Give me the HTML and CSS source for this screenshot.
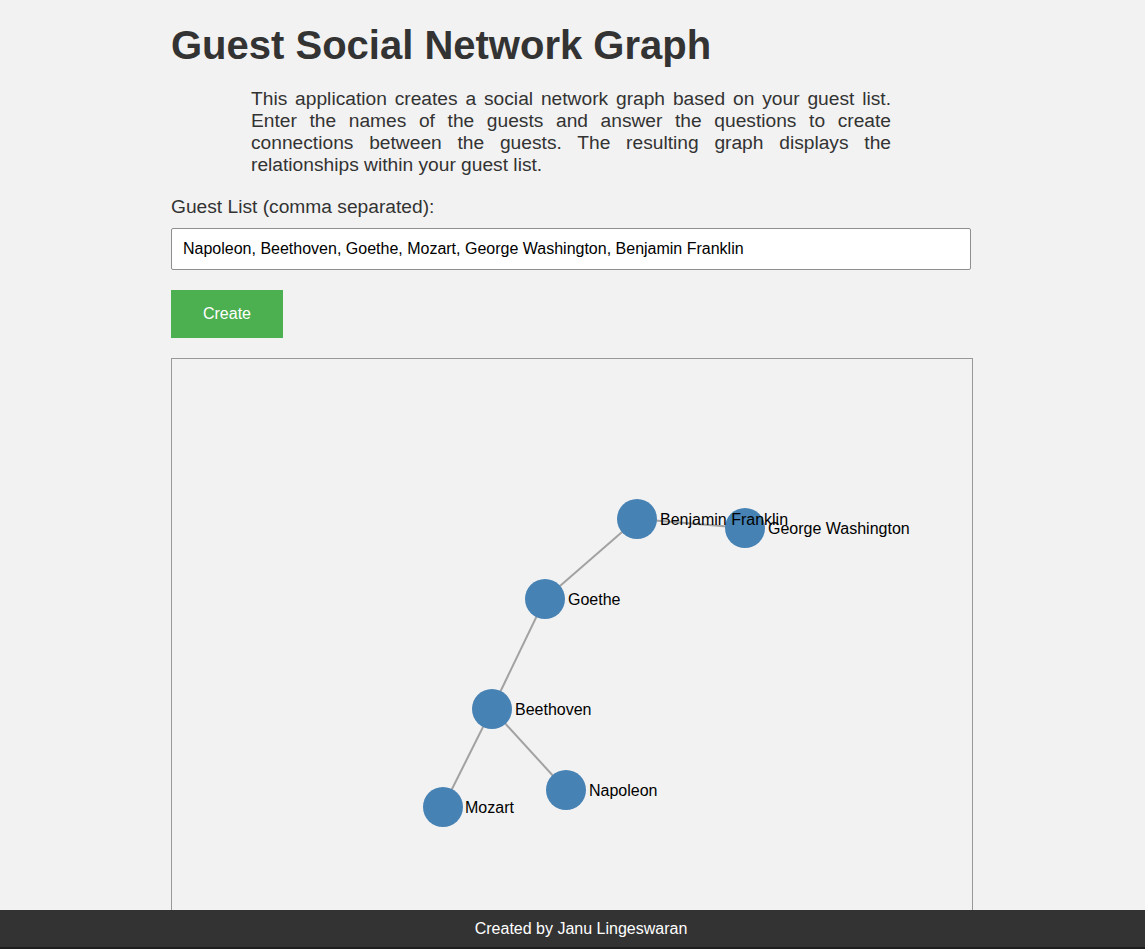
FILE: index.html
```html
<!DOCTYPE html>
<html lang="en">
<head>
<meta charset="utf-8">
<title>Guest Social Network Graph</title>
<link rel="stylesheet" href="styles.css">
</head>
<body>
<main class="container">
  <h1 class="title">Guest Social Network Graph</h1>
  <p class="intro">This application creates a social network graph based on your guest list. Enter the names of the guests and answer the questions to create connections between the guests. The resulting graph displays the relationships within your guest list.</p>
  <label class="field-label" for="guests">Guest List (comma separated):</label>
  <input class="guest-input" id="guests" type="text" value="Napoleon, Beethoven, Goethe, Mozart, George Washington, Benjamin Franklin">
  <button class="create-btn" type="button">Create</button>
  <div class="graph">
    <svg class="graph-svg" width="800" height="600" viewBox="0 0 800 600">
      <g class="links">
        <line x1="465" y1="160" x2="573" y2="169"/>
        <line x1="465" y1="160" x2="373" y2="240"/>
        <line x1="373" y1="240" x2="320" y2="350"/>
        <line x1="320" y1="350" x2="271" y2="448"/>
        <line x1="320" y1="350" x2="394" y2="431"/>
      </g>
      <g class="nodes">
        <circle cx="465" cy="160" r="20"/>
        <circle cx="573" cy="169" r="20"/>
        <circle cx="373" cy="240" r="20"/>
        <circle cx="320" cy="350" r="20"/>
        <circle cx="271" cy="448" r="20"/>
        <circle cx="394" cy="431" r="20"/>
      </g>
      <g class="labels">
        <text x="488" y="166">Benjamin Franklin</text>
        <text x="596" y="175">George Washington</text>
        <text x="396" y="246">Goethe</text>
        <text x="343" y="356">Beethoven</text>
        <text x="293" y="454">Mozart</text>
        <text x="417" y="437">Napoleon</text>
      </g>
    </svg>
  </div>
</main>
<footer class="footer">Created by Janu Lingeswaran</footer>
</body>
</html>
```
FILE: styles.css
```css
html, body {
  margin: 0;
  padding: 0;
}
body {
  background: #f2f2f2;
  font-family: "Liberation Sans", Arial, sans-serif;
  color: #333;
  padding-right: 3px;
  padding-bottom: 60px;
}
.container {
  width: 800px;
  margin: 0 auto;
  padding-top: 22px;
  display: flex;
  flex-direction: column;
  align-items: flex-start;
}
.title {
  margin: 0;
  font-size: 40px;
  font-weight: bold;
  line-height: 46px;
  color: #333;
}
.intro {
  box-sizing: border-box;
  width: 640px;
  margin: 20px 80px 20px 80px;
  font-size: 19.2px;
  line-height: 22px;
  text-align: justify;
  color: #333;
}
.field-label {
  font-size: 19.2px;
  line-height: 22px;
  color: #333;
}
.guest-input {
  box-sizing: border-box;
  width: 800px;
  height: 42px;
  margin-top: 10px;
  padding: 0 11px;
  border: 1px solid #8f8f8f;
  border-radius: 2px;
  background: #fff;
  font-family: "Liberation Sans", Arial, sans-serif;
  font-size: 16px;
  color: #000;
}
.create-btn {
  margin-top: 20px;
  width: 112px;
  height: 48px;
  border: none;
  background: #4caf50;
  color: #fff;
  font-family: "Liberation Sans", Arial, sans-serif;
  font-size: 16px;
  padding: 0;
}
.graph {
  margin-top: 20px;
  border: 1px solid #999;
  width: 800px;
  height: 600px;
  flex-shrink: 0;
}
.graph-svg {
  display: block;
}
.links line {
  stroke: #999;
  stroke-opacity: 0.9;
  stroke-width: 2;
}
.nodes circle {
  fill: #4682b4;
}
.labels text {
  font-family: "Liberation Sans", Arial, sans-serif;
  font-size: 16px;
  fill: #000;
}
.footer {
  position: fixed;
  left: 0;
  right: 0;
  bottom: 0;
  height: 37px;
  border-bottom: 2px solid #1e1e1e;
  padding-left: 17px;
  background: #333;
  color: #fff;
  font-size: 16px;
  display: flex;
  align-items: center;
  justify-content: center;
}
```
